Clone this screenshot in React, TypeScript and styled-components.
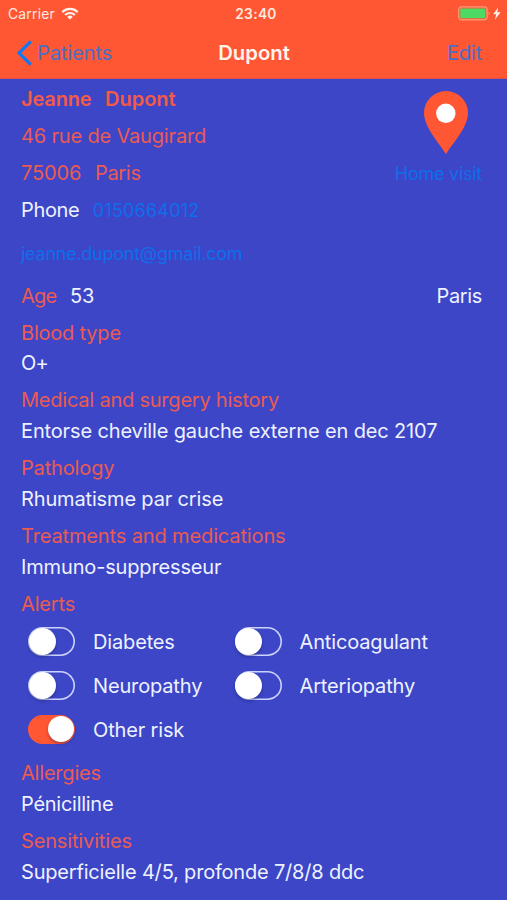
import React from "react";
import styled, { createGlobalStyle } from "styled-components";

const GlobalStyle = createGlobalStyle`
  html, body { margin: 0; padding: 0; background: #3c46c7; }
  * { box-sizing: border-box; }
`;

const ORANGE = "#ff5733";
const LABEL = "#ea5b51";
const VALUE = "#eef2ff";
const LINK = "#0f6eec";

const Screen = styled.div`
  width: 507px;
  height: 900px;
  overflow: hidden;
  background: #3c46c7;
  font-family: Inter, "Liberation Sans", sans-serif;
  font-size: 20px;
  line-height: 24px;
`;

const Header = styled.header`
  height: 79px;
  background: ${ORANGE};
  border-bottom: 1px solid #d9524f;
`;

const StatusBar = styled.div`
  height: 27px;
  padding: 0 5px 0 8px;
  display: grid;
  grid-template-columns: 1fr auto 1fr;
  align-items: center;
  font-size: 13.8px;
  color: #ffe9e0;
`;

const Carrier = styled.div`
  display: flex;
  align-items: center;
  gap: 6.5px;
`;

const Clock = styled.div`
  font-weight: 600;
  padding-left: 2px;
  letter-spacing: 0.3px;
`;

const Power = styled.div`
  display: flex;
  justify-content: flex-end;
`;

const NavBar = styled.nav`
  height: 51px;
  padding: 0 25px 0 16px;
  display: grid;
  grid-template-columns: 1fr auto 1fr;
  align-items: center;
`;

const NavButton = styled.a<{ $end?: boolean }>`
  display: flex;
  align-items: center;
  gap: 4px;
  justify-content: ${(p) => (p.$end ? "flex-end" : "flex-start")};
  color: #4a6fc6;
  font-size: 20.3px;
`;

const Title = styled.h1`
  margin: 0 0 0 10px;
  font-size: 20.3px;
  font-weight: 600;
  line-height: 24px;
  color: #fff4ee;
`;

const Text = styled.span<{ $track?: number }>`
  white-space: pre;
  letter-spacing: ${(p) => p.$track ?? -0.15}px;
`;

const Body = styled.main`
  padding: 8px 25px 0 21px;
`;

const Top = styled.section`
  display: flex;
  justify-content: space-between;
`;

const Identity = styled.div`
  display: flex;
  flex-direction: column;
  gap: 13px;
  color: ${LABEL};
`;

const Row = styled.div`
  display: flex;
  align-items: baseline;
  gap: 13.5px;
  height: 24px;
`;

const Name = styled(Row)`
  font-weight: 600;
  color: #f45a46;
`;

const Plain = styled.span`
  color: ${VALUE};
`;

const Link = styled.a`
  color: ${LINK};
  font-size: 18px;
  line-height: 25px;
`;

const Email = styled(Link)`
  display: block;
  margin-top: 19px;
`;

const Visit = styled.div`
  display: flex;
  flex-direction: column;
  align-items: flex-end;
  gap: 7px;
  padding-top: 4px;
`;

const PinBox = styled.div`
  height: 63px;
  padding-right: 14px;
`;

const AgeRow = styled.div`
  display: flex;
  justify-content: space-between;
  margin-top: 18px;
  color: ${VALUE};
`;

const Label = styled.span`
  color: ${LABEL};
`;

const Field = styled.section<{ $tight?: boolean }>`
  display: flex;
  flex-direction: column;
  gap: ${(p) => (p.$tight ? 6 : 7)}px;
  margin-top: 13px;
  color: ${VALUE};
`;

const Alerts = styled.div`
  display: grid;
  grid-template-columns: 206.5px 1fr;
  grid-auto-rows: 44px;
  align-items: center;
  padding-left: 7px;
  margin: 3px 0 -3px;
  color: ${VALUE};
`;

const Option = styled.label`
  display: flex;
  align-items: center;
  gap: 18px;
`;

const OptionName = styled.span`
  padding-top: 2px;
`;

const Track = styled.span<{ $on?: boolean }>`
  display: flex;
  align-items: center;
  justify-content: ${(p) => (p.$on ? "flex-end" : "flex-start")};
  width: 47px;
  height: 29px;
  border-radius: 15px;
  background: ${(p) => (p.$on ? ORANGE : "transparent")};
  box-shadow: ${(p) => (p.$on ? "none" : "inset 0 0 0 1.6px #cbd3fa")};
  padding: ${(p) => (p.$on ? "0 1px" : "0 0.5px")};
`;

const Knob = styled.span<{ $on?: boolean }>`
  width: ${(p) => (p.$on ? 26 : 27)}px;
  height: ${(p) => (p.$on ? 26 : 27)}px;
  border-radius: 50%;
  background: #fff;
  box-shadow: 0 2px 3px rgba(20, 20, 70, 0.35);
`;

const WifiIcon = () => (
  <svg width="18" height="13" viewBox="0 0 18 13" fill="none" stroke="#fff2ec" strokeWidth="2.2">
    <path d="M1.3 5.1a11 11 0 0 1 15.4 0" />
    <path d="M4.1 8a7 7 0 0 1 9.8 0" />
    <path d="M9 12.6 6.2 9.9a4 4 0 0 1 5.6 0z" fill="#fff2ec" stroke="none" />
  </svg>
);

const BatteryIcon = () => (
  <svg width="44" height="15" viewBox="0 0 44 15">
    <rect x="0.7" y="0.9" width="28.4" height="13" rx="2.8" fill="none" stroke="#ff9c77" strokeWidth="1.2" />
    <rect x="2.3" y="2.6" width="25" height="9.6" rx="1" fill="#4cd964" />
    <path d="M30.6 5.2q2 2.1 0 4.4z" fill="#ff9c77" />
    <path d="M40.2 1.4 35.2 8.3h3.1l-1.5 5.4 5.8-7.5h-3.3z" fill="#fff2ec" />
  </svg>
);

const BackIcon = () => (
  <svg width="17" height="26" viewBox="0 0 17 26" fill="none" stroke="#1277f3" strokeWidth="3.2">
    <path d="M14.8 1.3 3 13l11.8 11.7" />
  </svg>
);

const PinIcon = () => (
  <svg width="44" height="63" viewBox="0 0 44 63">
    <path d="M22 63C15 52 0 36 0 22a22 22 0 0 1 44 0C44 36 29 52 22 63Z" fill={ORANGE} />
    <circle cx="21.8" cy="22.3" r="9.7" fill="#fff" />
  </svg>
);

type Entry = { label: string; value?: string; lt?: number; vt?: number; tight?: boolean };

const history: Entry[] = [
  { label: "Blood type", value: "O+", lt: -0.2, vt: -0.8, tight: true },
  { label: "Medical and surgery history", value: "Entorse cheville gauche externe en dec 2107", lt: -0.22, vt: -0.14 },
  { label: "Pathology", value: "Rhumatisme par crise" },
  { label: "Treatments and medications", value: "Immuno-suppresseur", lt: -0.13 },
  { label: "Alerts" },
];

const findings: Entry[] = [
  { label: "Allergies", value: "Pénicilline", lt: -0.2, vt: -0.27 },
  { label: "Sensitivities", value: "Superficielle 4/5, profonde 7/8/8 ddc", vt: -0.19 },
];

const alerts = [
  { name: "Diabetes" },
  { name: "Anticoagulant" },
  { name: "Neuropathy" },
  { name: "Arteriopathy" },
  { name: "Other risk", on: true },
];

const Fields = ({ items }: { items: Entry[] }) => (
  <>
    {items.map((e) => (
      <Field key={e.label} $tight={e.tight}>
        <Label><Text $track={e.lt}>{e.label}</Text></Label>
        {e.value && <Text $track={e.vt}>{e.value}</Text>}
      </Field>
    ))}
  </>
);

export default function App() {
  return (
    <>
      <GlobalStyle />
      <Screen>
        <Header>
          <StatusBar>
            <Carrier><Text $track={0.25}>Carrier</Text><WifiIcon /></Carrier>
            <Clock>23:40</Clock>
            <Power><BatteryIcon /></Power>
          </StatusBar>
          <NavBar>
            <NavButton><BackIcon /><Text $track={-0.25}>Patients</Text></NavButton>
            <Title>Dupont</Title>
            <NavButton $end><Text $track={-0.2}>Edit</Text></NavButton>
          </NavBar>
        </Header>
        <Body>
          <Top>
            <Identity>
              <Name><Text>Jeanne</Text><Text $track={0}>Dupont</Text></Name>
              <Text $track={-0.17}>46 rue de Vaugirard</Text>
              <Row><Text $track={-0.1}>75006</Text><Text $track={-0.3}>Paris</Text></Row>
              <Row><Plain><Text $track={-0.35}>Phone</Text></Plain><Link><Text $track={0.2}>0150664012</Text></Link></Row>
            </Identity>
            <Visit>
              <PinBox><PinIcon /></PinBox>
              <Link><Text $track={-0.25}>Home visit</Text></Link>
            </Visit>
          </Top>
          <Email><Text $track={-0.25}>jeanne.dupont@gmail.com</Text></Email>
          <AgeRow>
            <Row><Label><Text $track={-0.75}>Age</Text></Label><Text>53</Text></Row>
            <Text $track={-0.35}>Paris</Text>
          </AgeRow>
          <Fields items={history} />
          <Alerts>
            {alerts.map((a) => (
              <Option key={a.name}>
                <Track $on={a.on}><Knob $on={a.on} /></Track>
                <OptionName><Text>{a.name}</Text></OptionName>
              </Option>
            ))}
          </Alerts>
          <Fields items={findings} />
        </Body>
      </Screen>
    </>
  );
}
